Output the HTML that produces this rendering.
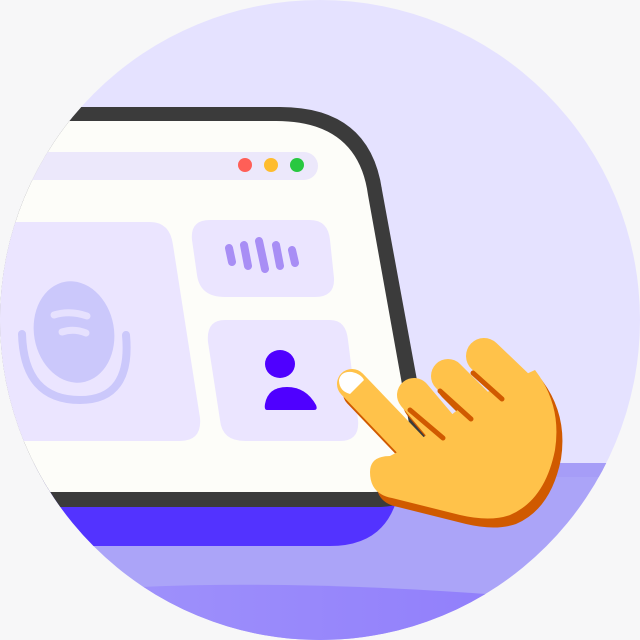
<!DOCTYPE html>
<html><head><style>html,body{margin:0;padding:0;background:#f7f7f8}svg{display:block}</style></head><body>
<svg width="640" height="640" viewBox="0 0 640 640" xmlns="http://www.w3.org/2000/svg">
<defs>
<clipPath id="c"><circle cx="320" cy="320" r="320"/></clipPath>
<linearGradient id="g" x1="0" x2="1"><stop offset="0" stop-color="#a397fb"/><stop offset="1" stop-color="#8c78fb"/></linearGradient>
</defs>
<rect width="640" height="640" fill="#f7f7f8"/>
<g clip-path="url(#c)">
<rect width="640" height="640" fill="#e5e2ff"/>
<rect x="0" y="463" width="640" height="180" fill="#aba4f8"/>
<rect x="0" y="463" width="640" height="14" fill="#a69df7"/>
<path d="M140,587 Q300,580 500,595 L640,640 L0,640 Z" fill="url(#g)"/>
<path d="M-20,480 L330,480 Q390,480 395,505 Q380,546 330,546 L-20,546 Z" fill="#5333ff"/>
<path d="M-20,107 L280,107 Q370,107 382,190 L428,440 Q440,505 380,507 L-20,507 Z" fill="#3b3b3b"/>
<path d="M-20,121 L276,121 Q358,121 368,195 L412,440 Q420,492 372,492 L-20,492 Z" fill="#fdfdf9"/>
<rect x="20" y="152" width="298" height="28" rx="14" fill="#ece8fb"/>
<circle cx="245" cy="165" r="7" fill="#ff5f57"/>
<circle cx="271" cy="165" r="7" fill="#febc2e"/>
<circle cx="297" cy="165" r="7" fill="#28c840"/>
<path d="M-20,222 L150,222 Q170,222 173,245 L200,418 Q202,441 180,441 L-20,441 Z" fill="#ebe5ff"/>
<path d="M210,220 L310,220 Q328,220 330,240 L334,278 Q335,297 315,297 L225,297 Q200,297 197,275 L192,240 Q190,220 210,220 Z" fill="#ebe5ff"/>
<path d="M225,320 L330,320 Q346,320 348,340 L358,420 Q360,441 340,441 L245,441 Q222,441 220,420 L208,342 Q206,320 225,320 Z" fill="#ebe5ff"/>
<ellipse cx="74" cy="332" rx="40" ry="51" transform="rotate(-10 74 332)" fill="#cbc8fb"/>
<path d="M54,315 Q70,310 87,316 M62,332 Q74,328 86,333" stroke="#e6e1fe" stroke-width="7" fill="none" stroke-linecap="round"/>
<path d="M22,334 Q24,400 80,400 Q132,400 126,335" stroke="#cbc8fb" stroke-width="8" fill="none" stroke-linecap="round"/>
<g stroke="#a88ef5" stroke-width="8" stroke-linecap="round">
<line x1="229" y1="248" x2="232" y2="262"/>
<line x1="244" y1="245" x2="248" y2="266"/>
<line x1="259" y1="241" x2="265" y2="269"/>
<line x1="276" y1="245" x2="280" y2="266"/>
<line x1="292" y1="250" x2="295" y2="263"/>
</g>
<ellipse cx="280" cy="364" rx="15" ry="14" fill="#4f00ff"/>
<path d="M267,410 L314,410 Q318,410 316,405 Q306,387 287,387 Q268,387 265,404 Q264,410 267,410 Z" fill="#4f00ff"/>
<g transform="translate(6,9)" fill="#d05a00" stroke="#d05a00">
<line x1="352" y1="384" x2="420" y2="455" stroke-width="30" stroke-linecap="round"/>
<line x1="414" y1="395" x2="452" y2="440" stroke-width="34" stroke-linecap="round"/>
<line x1="448" y1="376" x2="492" y2="420" stroke-width="34" stroke-linecap="round"/>
<line x1="484" y1="356" x2="530" y2="400" stroke-width="36" stroke-linecap="round"/>
<path stroke="none" d="M370,472 Q370,456 390,456 L420,440 L470,400 L535,370 Q562,405 555,450 Q545,500 510,515 Q490,522 460,515 L392,498 Q370,494 370,472 Z"/>
</g>
<g fill="#ffc24a" stroke="#ffc24a">
<line x1="352" y1="384" x2="420" y2="455" stroke-width="30" stroke-linecap="round"/>
<line x1="414" y1="395" x2="452" y2="440" stroke-width="34" stroke-linecap="round"/>
<line x1="448" y1="376" x2="492" y2="420" stroke-width="34" stroke-linecap="round"/>
<line x1="484" y1="356" x2="530" y2="400" stroke-width="36" stroke-linecap="round"/>
<path stroke="none" d="M370,472 Q370,456 390,456 L420,440 L470,400 L535,370 Q562,405 555,450 Q545,500 510,515 Q490,522 460,515 L392,498 Q370,494 370,472 Z"/>
</g>
<path d="M339,380 Q341,371 352,372 Q361,374 364,380 L350,394 Q339,391 339,380 Z" fill="#fff"/>
<g stroke="#d05a00" stroke-width="5" stroke-linecap="round">
<line x1="410" y1="410" x2="443" y2="438"/>
<line x1="440" y1="391" x2="471" y2="419"/>
<line x1="473" y1="373" x2="502" y2="399"/>
</g>
</g>
</svg>
</body></html>
